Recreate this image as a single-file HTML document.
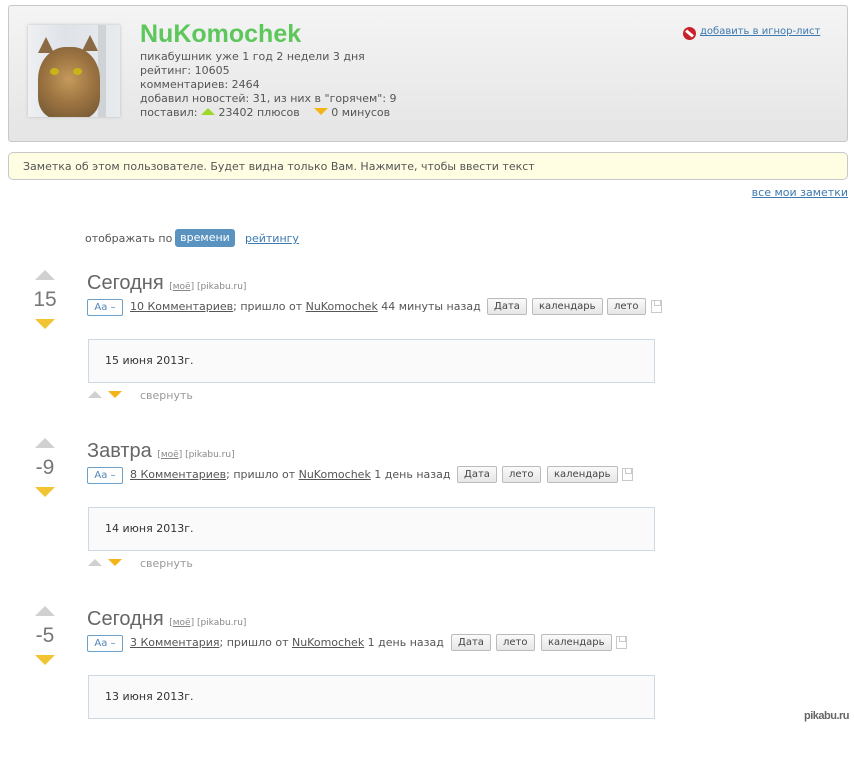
<!DOCTYPE html>
<html><head><meta charset="utf-8"><style>
*{margin:0;padding:0;box-sizing:border-box}
body{width:854px;height:727px;background:#fff;position:relative;overflow:hidden;font-family:"DejaVu Sans","Liberation Sans",sans-serif;font-size:11px;color:#555}
.a{position:absolute;white-space:nowrap}
a{color:#555;text-decoration:underline}
.blue{color:#3d79b0}
.prof{left:8px;top:5px;width:840px;height:137px;border:1px solid #c8c8c8;border-radius:3px;background:linear-gradient(#f4f4f4,#e5e5e5)}
.av{left:28px;top:25px;width:92px;height:92px;overflow:hidden;background:linear-gradient(90deg,#eef0f3 0,#dfe3e8 40%,#e8ebee 100%);box-shadow:0 0 3px #bbb}
.note{left:8px;top:152px;width:840px;height:28px;border:1px solid #c8c8c8;border-radius:5px;background:#fffde2;padding:7px 14px;font-size:11px}
.up{width:0;height:0;border-left:10px solid transparent;border-right:10px solid transparent;border-bottom:10px solid #d0d0d0}
.dn{width:0;height:0;border-left:10px solid transparent;border-right:10px solid transparent;border-top:10px solid #f3c431}
.sup{width:0;height:0;border-left:7px solid transparent;border-right:7px solid transparent;border-bottom:7px solid #d0d0d0}
.sdn{width:0;height:0;border-left:7px solid transparent;border-right:7px solid transparent;border-top:7px solid #f3b41a}
.post{position:absolute;left:0;width:854px;height:160px}
.num{left:25px;width:40px;text-align:center;font-family:"Liberation Sans",sans-serif;font-size:21px;color:#777}
.ttl{left:87px;font-family:"Liberation Sans",sans-serif;font-size:20px;color:#666}
.ttl small{font-family:"DejaVu Sans",sans-serif;font-size:9px;color:#888}
.aa{left:87px;width:36px;height:17px;border:1px solid #6ba0cb;border-radius:2px;color:#4f88b8;font-size:10px;text-align:center;line-height:15px}
.tag{height:17px;border:1px solid #bbb;border-radius:2px;background:linear-gradient(#fafafa,#e6e6e6);font-size:10px;line-height:15px;padding:0 6px;color:#444}
.box{left:88px;width:567px;height:44px;border:1px solid #cddae5;background:#fafafa;padding:14px 16px;color:#333}
.fl{width:11px;height:13px;border:1px solid #c9c9c9}
.fl::before{content:"";position:absolute;left:2px;top:0;width:5px;height:4px;border:1px solid #c9c9c9;border-top:0}
</style></head><body>
<div class="a prof"></div>
<div class="a av">
<div style="position:absolute;left:70px;top:0;width:8px;height:92px;background:#cfd3d6"></div>
<div style="position:absolute;left:10px;top:22px;width:62px;height:72px;border-radius:45% 45% 30% 30%;background:radial-gradient(circle at 50% 45%,#c69a5c 0,#9a7240 50%,#6e5432 100%)"></div>
<div style="position:absolute;left:10px;top:12px;width:0;height:0;border-left:8px solid transparent;border-right:8px solid transparent;border-bottom:16px solid #8a6a44"></div>
<div style="position:absolute;left:54px;top:10px;width:0;height:0;border-left:8px solid transparent;border-right:8px solid transparent;border-bottom:16px solid #8a6a44"></div>
<div style="position:absolute;left:22px;top:43px;width:9px;height:7px;border-radius:50%;background:#c8b318"></div>
<div style="position:absolute;left:45px;top:43px;width:9px;height:7px;border-radius:50%;background:#c8b318"></div>
</div>
<div class="a" style="left:140px;top:20px;font-family:'Liberation Sans',sans-serif;font-weight:bold;font-size:25px;color:#5dc75b">NuKomochek</div>
<div class="a" style="left:140px;top:50px;line-height:14px;font-size:11px">пикабушник уже 1 год 2 недели 3 дня<br>рейтинг: 10605<br>комментариев: 2464<br>добавил новостей: 31, из них в "горячем": 9<br>поставил: <span style="display:inline-block;width:0;height:0;border-left:7px solid transparent;border-right:7px solid transparent;border-bottom:7px solid #9fd62a;vertical-align:1px"></span> 23402 плюсов &nbsp;&nbsp; <span style="display:inline-block;width:0;height:0;border-left:7px solid transparent;border-right:7px solid transparent;border-top:7px solid #f3b41a;vertical-align:1px"></span> 0 минусов</div>
<div class="a" style="left:683px;top:27px;width:13px;height:13px;border-radius:50%;background:#c8232a"><div style="position:absolute;left:2px;top:5px;width:9px;height:3px;background:#fff;transform:rotate(40deg)"></div></div>
<div class="a blue" style="left:700px;top:26px;font-size:10px;text-decoration:underline">добавить в игнор-лист</div>
<div class="a note">Заметка об этом пользователе. Будет видна только Вам. Нажмите, чтобы ввести текст</div>
<div class="a blue" style="right:6px;top:186px;font-size:11px;text-decoration:underline">все мои заметки</div>
<div class="a" style="left:85px;top:232px">отображать по</div>
<div class="a" style="left:175px;top:229px;width:60px;height:18px;background:#5a93bf;border-radius:3px;color:#fff;text-align:center;line-height:18px">времени</div>
<div class="a blue" style="left:245px;top:232px;text-decoration:underline">рейтингу</div>

<div class="post" style="top:268px">
<div class="a up" style="left:35px;top:2px"></div>
<div class="a num" style="top:20px">15</div>
<div class="a dn" style="left:35px;top:51px"></div>
<div class="a ttl" style="top:4px">Сегодня <small>[<u>моё</u>] [pikabu.ru]</small></div>
<div class="a aa" style="top:31px">Aa –</div>
<div class="a" style="left:130px;top:32px"><a>10 Комментариев</a>; пришло от <a>NuKomochek</a> 44 минуты назад</div>
<div class="a tag" style="left:487px;top:30px">Дата</div>
<div class="a tag" style="left:532px;top:30px">календарь</div>
<div class="a tag" style="left:607px;top:30px">лето</div>
<div class="a fl" style="left:651px;top:32px"></div>
<div class="a box" style="top:71px">15 июня 2013г.</div>
<div class="a sup" style="left:88px;top:123px"></div>
<div class="a sdn" style="left:108px;top:123px"></div>
<div class="a" style="left:140px;top:121px;color:#999">свернуть</div>
</div>

<div class="post" style="top:436px">
<div class="a up" style="left:35px;top:2px"></div>
<div class="a num" style="top:20px">-9</div>
<div class="a dn" style="left:35px;top:51px"></div>
<div class="a ttl" style="top:4px">Завтра <small>[<u>моё</u>] [pikabu.ru]</small></div>
<div class="a aa" style="top:31px">Aa –</div>
<div class="a" style="left:130px;top:32px"><a>8 Комментариев</a>; пришло от <a>NuKomochek</a> 1 день назад</div>
<div class="a tag" style="left:457px;top:30px">Дата</div>
<div class="a tag" style="left:502px;top:30px">лето</div>
<div class="a tag" style="left:547px;top:30px">календарь</div>
<div class="a fl" style="left:622px;top:32px"></div>
<div class="a box" style="top:71px">14 июня 2013г.</div>
<div class="a sup" style="left:88px;top:123px"></div>
<div class="a sdn" style="left:108px;top:123px"></div>
<div class="a" style="left:140px;top:121px;color:#999">свернуть</div>
</div>

<div class="post" style="top:604px">
<div class="a up" style="left:35px;top:2px"></div>
<div class="a num" style="top:20px">-5</div>
<div class="a dn" style="left:35px;top:51px"></div>
<div class="a ttl" style="top:4px">Сегодня <small>[<u>моё</u>] [pikabu.ru]</small></div>
<div class="a aa" style="top:31px">Aa –</div>
<div class="a" style="left:130px;top:32px"><a>3 Комментария</a>; пришло от <a>NuKomochek</a> 1 день назад</div>
<div class="a tag" style="left:451px;top:30px">Дата</div>
<div class="a tag" style="left:496px;top:30px">лето</div>
<div class="a tag" style="left:541px;top:30px">календарь</div>
<div class="a fl" style="left:616px;top:32px"></div>
<div class="a box" style="top:71px">13 июня 2013г.</div>
</div>
<div class="a" style="left:804px;top:710px;font-family:'Liberation Sans',sans-serif;font-size:11px;color:#666;font-weight:bold;letter-spacing:-0.5px">pikabu.ru</div>
</body></html>
